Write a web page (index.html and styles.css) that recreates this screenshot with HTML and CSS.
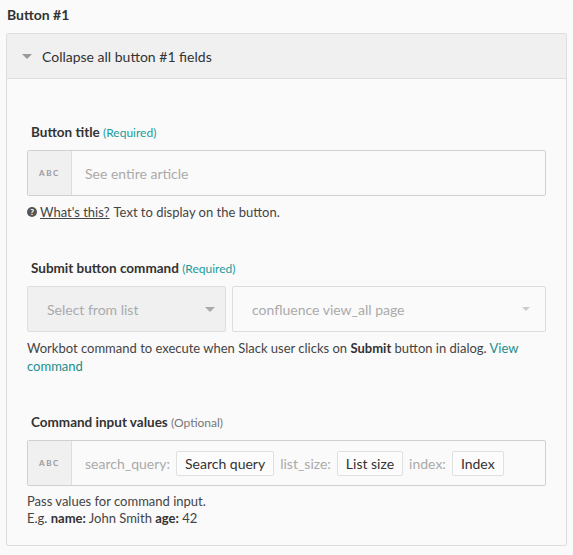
FILE: index.html
```html
<!DOCTYPE html>
<html>
<head>
<meta charset="utf-8">
<link rel="stylesheet" href="styles.css">
</head>
<body>
<div class="title">Button #1</div>
<div class="panel">
  <div class="panel-head">
    <span class="caret-down"></span>
    <span>Collapse all button #1 fields</span>
  </div>
  <div class="panel-body">
    <div class="field">
      <div class="label">Button title <span class="req">(Required)</span></div>
      <div class="input">
        <div class="abc">ABC</div>
        <div class="input-text placeholder">See entire article</div>
      </div>
      <div class="help">
        <svg class="qicon" width="10" height="10" viewBox="0 0 10 10"><circle cx="5" cy="5" r="5" fill="#555"/><text x="5" y="8.2" text-anchor="middle" font-family="Lato, sans-serif" font-weight="900" font-size="8" fill="#fafafa">?</text></svg>
        <a class="whats">What's this?</a> Text to display on the button.
      </div>
    </div>

    <div class="field">
      <div class="label">Submit button command <span class="req">(Required)</span></div>
      <div class="selects">
        <div class="select sel1"><span>Select from list</span><span class="tri"></span></div>
        <div class="select sel2"><span>confluence view_all page</span><span class="tri small"></span></div>
      </div>
      <div class="desc">Workbot command to execute when Slack user clicks on <b>Submit</b> button in dialog. <a class="link">View</a> <a class="link">command</a></div>
    </div>

    <div class="field">
      <div class="label">Command input values <span class="opt">(Optional)</span></div>
      <div class="input">
        <div class="abc">ABC</div>
        <div class="input-text chips">
          <span class="key">search_query:</span><span class="chip">Search query</span>
          <span class="key">list_size:</span><span class="chip">List size</span>
          <span class="key">index:</span><span class="chip">Index</span>
        </div>
      </div>
      <div class="desc tight">Pass values for command input.<br>E.g. <b>name:</b> John Smith <b>age:</b> 42</div>
    </div>
  </div>
</div>
</body>
</html>
```
FILE: styles.css
```css
html, body {
  margin: 0;
  padding: 0;
  background: #fafafa;
  font-family: Lato, "Open Sans", sans-serif;
  color: #444;
}
.title {
  font-weight: 700;
  font-size: 14px;
  color: #333;
  padding: 6px 7px 0;
  line-height: 18px;
  height: 27px;
}
.panel {
  margin: 0 6px 0 6px;
  border: 1px solid #dedede;
  border-radius: 2px;
  background: #fafafa;
}
.panel-head {
  height: 44px;
  background: #f0f0f0;
  border-bottom: 1px solid #dedede;
  display: flex;
  align-items: center;
  font-size: 14px;
  color: #333;
  padding-left: 15px;
}
.caret-down {
  width: 0;
  height: 0;
  border-left: 5px solid transparent;
  border-right: 5px solid transparent;
  border-top: 5px solid #999;
  margin-right: 10px;
  margin-top: 1px;
}
.panel-body {
  padding: 44px 20px 18px 20px;
  display: flex;
  flex-direction: column;
  gap: 38px;
}
.label {
  font-weight: 700;
  font-size: 13.5px;
  color: #333;
  line-height: 18px;
  margin-left: 4px;
  margin-bottom: 8px;
}
.req {
  font-weight: 400;
  font-size: 12px;
  color: #1a9a9a;
}
.opt {
  font-weight: 400;
  font-size: 12px;
  color: #777;
}
.input {
  display: flex;
  height: 44px;
  border: 1px solid #d0d0d0;
  border-radius: 2px;
  background: #fafafa;
}
.abc {
  width: 43px;
  flex: none;
  background: #f0f0f0;
  border-right: 1px solid #dedede;
  font-size: 8px;
  letter-spacing: 1.6px;
  font-weight: 700;
  color: #999;
  display: flex;
  align-items: center;
  justify-content: center;
}
.input-text {
  display: flex;
  align-items: center;
  padding-left: 13px;
  font-size: 14px;
}
.placeholder {
  color: #aaa;
}
.help {
  margin-top: 7px;
  font-size: 13px;
  line-height: 18px;
  color: #444;
  display: flex;
  align-items: center;
}
.qicon {
  margin-right: 3px;
}
.whats {
  text-decoration: underline;
  color: #444;
  margin-right: 4px;
}
.selects {
  display: flex;
  gap: 6px;
  height: 46px;
}
.select {
  border: 1px solid #dedede;
  border-radius: 2px;
  display: flex;
  align-items: center;
  justify-content: space-between;
  font-size: 14px;
  color: #aaa;
  box-sizing: border-box;
}
.sel1 {
  width: 199px;
  background: #f0f0f0;
  padding: 0 10px 0 19px;
}
.sel2 {
  flex: 1;
  background: #fafafa;
  padding: 0 15px 0 19px;
}
.tri {
  width: 0;
  height: 0;
  border-left: 5px solid transparent;
  border-right: 5px solid transparent;
  border-top: 5px solid #aaa;
}
.tri.small {
  border-left-width: 4px;
  border-right-width: 4px;
  border-top: 4px solid #ccc;
}
.desc {
  margin-top: 7px;
  font-size: 13px;
  line-height: 18px;
  color: #444;
}
.desc.tight {
  margin-top: 7px;
  line-height: 17px;
}
.desc b {
  font-weight: 700;
  color: #333;
}
.link {
  color: #1a8e8e;
}
.chips {
  gap: 6px;
}
.key {
  color: #aaa;
}
.chip {
  border: 1px solid #e0e0e0;
  background: #fcfcfc;
  border-radius: 2px;
  color: #333;
  padding: 0 8px;
  height: 23px;
  line-height: 23px;
}
```
